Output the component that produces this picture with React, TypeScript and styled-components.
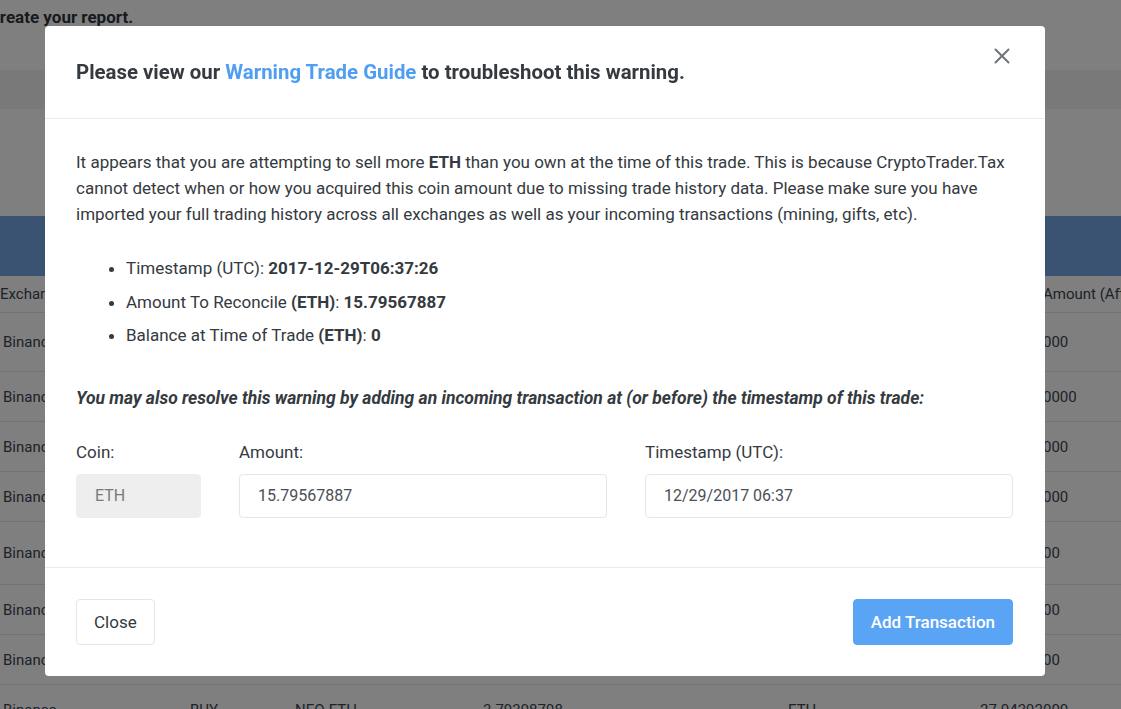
import React from "react";
import styled, { createGlobalStyle } from "styled-components";

const GlobalStyle = createGlobalStyle`
  html, body { margin: 0; padding: 0; }
  body {
    font-family: Roboto, "Liberation Sans", Arial, sans-serif;
    background: #ffffff;
    color: #343a40;
    overflow: hidden;
  }
  * { box-sizing: border-box; }
`;

/* ---------- background page ---------- */

const Page = styled.div`
  width: 1121px;
  height: 709px;
  overflow: hidden;
  background: #ffffff;
`;

const TopBar = styled.div`
  height: 70px;
  padding-top: 7px;
  font-size: 17px;
  font-weight: 700;
  line-height: 20px;
  color: #2f3640;
`;

const TopText = styled.div`
  margin-left: -9px;
`;

const SubBand = styled.div`
  height: 39px;
  background: #f3f3f3;
`;

const Spacer = styled.div`
  height: 107px;
`;

const BlueBand = styled.div`
  height: 60px;
  background: #76a6e5;
`;

const Row = styled.div<{ $h: number }>`
  display: grid;
  grid-template-columns: 190px 105px 188px 305px 190px 65px 1fr;
  align-items: center;
  height: ${(p) => p.$h}px;
  border-bottom: 1px solid #dee2e6;
  font-size: 15px;
  color: #3d4652;
  white-space: nowrap;
`;

const Cell = styled.div<{ $pad?: number }>`
  padding-left: ${(p) => p.$pad ?? 0}px;
  overflow: visible;
`;

/* ---------- modal ---------- */

const Overlay = styled.div`
  position: fixed;
  inset: 0;
  background: rgba(0, 0, 0, 0.5);
  display: flex;
  justify-content: flex-start;
  align-items: flex-start;
  padding: 26px 0 0 45px;
`;

const Modal = styled.div`
  width: 1000px;
  background: #ffffff;
  border-radius: 4px;
  color: #343a40;
`;

const Header = styled.div`
  position: relative;
  height: 93px;
  padding: 34px 31px 0;
  border-bottom: 1px solid #e9ecef;
`;

const Title = styled.h5`
  margin: 0;
  font-size: 20.4px;
  line-height: 24px;
  font-weight: 700;
  color: #343a40;
`;

const Link = styled.a`
  color: #4f9ef2;
  text-decoration: none;
`;

const CloseX = styled.button`
  position: absolute;
  top: 21px;
  right: 34px;
  width: 18px;
  height: 18px;
  padding: 0;
  border: 0;
  background: transparent;
  display: flex;
  align-items: center;
  justify-content: center;
  cursor: pointer;
`;

const Body = styled.div`
  padding: 30px 32px 49px 31px;
  font-size: 17px;
  line-height: 26px;
  border-bottom: 1px solid #e9ecef;
`;

const Para = styled.p`
  margin: 0;
`;

const List = styled.ul`
  margin: 25px 0 0;
  padding-left: 50px;
`;

const Item = styled.li`
  line-height: 33.5px;
`;

const Note = styled.p`
  margin: 32px 0 0;
  font-size: 17.5px;
  font-weight: 700;
  font-style: italic;
`;

const FormGrid = styled.div`
  display: grid;
  grid-template-columns: 125px 1fr 1fr;
  column-gap: 38px;
  margin-top: 29px;
`;

const Field = styled.div`
  display: flex;
  flex-direction: column;
  gap: 10px;
`;

const Label = styled.label`
  font-size: 17px;
  line-height: 24px;
  color: #343a40;
`;

const Input = styled.div<{ $disabled?: boolean }>`
  height: 44px;
  display: flex;
  align-items: center;
  padding-left: 18px;
  border: 1px solid ${(p) => (p.$disabled ? "#eeeeee" : "#e3e6ea")};
  border-radius: 4px;
  background: ${(p) => (p.$disabled ? "#eeeeee" : "#ffffff")};
  color: ${(p) => (p.$disabled ? "#7a7a7a" : "#4a5058")};
  font-size: 16px;
`;

const Footer = styled.div`
  display: flex;
  justify-content: space-between;
  align-items: center;
  padding: 31px 32px 31px 31px;
`;

const Button = styled.button<{ $primary?: boolean }>`
  height: 46px;
  padding: 0 17px;
  font-family: Roboto, "Liberation Sans", Arial, sans-serif;
  font-size: 17px;
  font-weight: ${(p) => (p.$primary ? 500 : 400)};
  border-radius: 4px;
  border: 1px solid ${(p) => (p.$primary ? "#5aa4f6" : "#e3e6ea")};
  background: ${(p) => (p.$primary ? "#5aa4f6" : "#ffffff")};
  color: ${(p) => (p.$primary ? "#ffffff" : "#343a40")};
  cursor: pointer;
`;

const rows: { h: number; cells: string[] }[] = [
  { h: 59, cells: ["Binance", "BUY", "BNB-ETH", "41.20000000", "BNB", "41.20000000", ""] },
  { h: 50, cells: ["Binance", "BUY", "TRX-ETH", "1200.00000", "TRX", "120.00000000", ""] },
  { h: 50, cells: ["Binance", "SELL", "XRP-ETH", "100.000000", "ETH", "10.82000000", ""] },
  { h: 50, cells: ["Binance", "BUY", "ADA-ETH", "250.000000", "ADA", "25.50000000", ""] },
  { h: 63, cells: ["Binance", "BUY", "XLM-ETH", "1.90000000", "XLM", "1.90000000", ""] },
  { h: 50, cells: ["Binance", "BUY", "IOTA-ETH", "1.50000000", "IOTA", "1.50000000", ""] },
  { h: 50, cells: ["Binance", "BUY", "EOS-ETH", "1.10000000", "EOS", "1.10000000", ""] },
  { h: 50, cells: ["Binance", "BUY", "NEO-ETH", "3.79398798", "ETH", "27.04392000", ""] },
];

export default function App() {
  return (
    <>
      <GlobalStyle />
      <Page>
        <TopBar>
          <TopText>create your report.</TopText>
        </TopBar>
        <SubBand />
        <Spacer />
        <BlueBand />
        <Row $h={37}>
          <Cell>Exchange</Cell>
          <Cell $pad={2}>Type</Cell>
          <Cell>Pair</Cell>
          <Cell>Amount</Cell>
          <Cell>Currency</Cell>
          <Cell />
          <Cell>Amount (After Fee)</Cell>
        </Row>
        {rows.map((r, i) => (
          <Row key={i} $h={r.h}>
            {r.cells.map((c, j) => (
              <Cell key={j} $pad={j === 0 ? 3 : j === 5 ? 2 : 0}>
                {c}
              </Cell>
            ))}
          </Row>
        ))}
      </Page>

      <Overlay>
        <Modal>
          <Header>
            <Title>
              Please view our <Link href="#">Warning Trade Guide</Link> to troubleshoot this warning.
            </Title>
            <CloseX aria-label="Close">
              <svg width="16" height="16" viewBox="0 0 16 16">
                <path d="M1.5 1.5 L14.5 14.5 M14.5 1.5 L1.5 14.5" stroke="#6f747a" strokeWidth="2" strokeLinecap="round" />
              </svg>
            </CloseX>
          </Header>
          <Body>
            <Para>
              It appears that you are attempting to sell more <b>ETH</b> than you own at the time of this trade. This is
              because CryptoTrader.Tax cannot detect when or how you acquired this coin amount due to missing trade
              history data. Please make sure you have imported your full trading history across all exchanges as well as
              your incoming transactions (mining, gifts, etc).
            </Para>
            <List>
              <Item>
                Timestamp (UTC): <b>2017-12-29T06:37:26</b>
              </Item>
              <Item>
                Amount To Reconcile <b>(ETH)</b>: <b>15.79567887</b>
              </Item>
              <Item>
                Balance at Time of Trade <b>(ETH)</b>: <b>0</b>
              </Item>
            </List>
            <Note>
              You may also resolve this warning by adding an incoming transaction at (or before) the timestamp of this
              trade:
            </Note>
            <FormGrid>
              <Field>
                <Label>Coin:</Label>
                <Input $disabled>ETH</Input>
              </Field>
              <Field>
                <Label>Amount:</Label>
                <Input>15.79567887</Input>
              </Field>
              <Field>
                <Label>Timestamp (UTC):</Label>
                <Input>12/29/2017 06:37</Input>
              </Field>
            </FormGrid>
          </Body>
          <Footer>
            <Button>Close</Button>
            <Button $primary>Add Transaction</Button>
          </Footer>
        </Modal>
      </Overlay>
    </>
  );
}
